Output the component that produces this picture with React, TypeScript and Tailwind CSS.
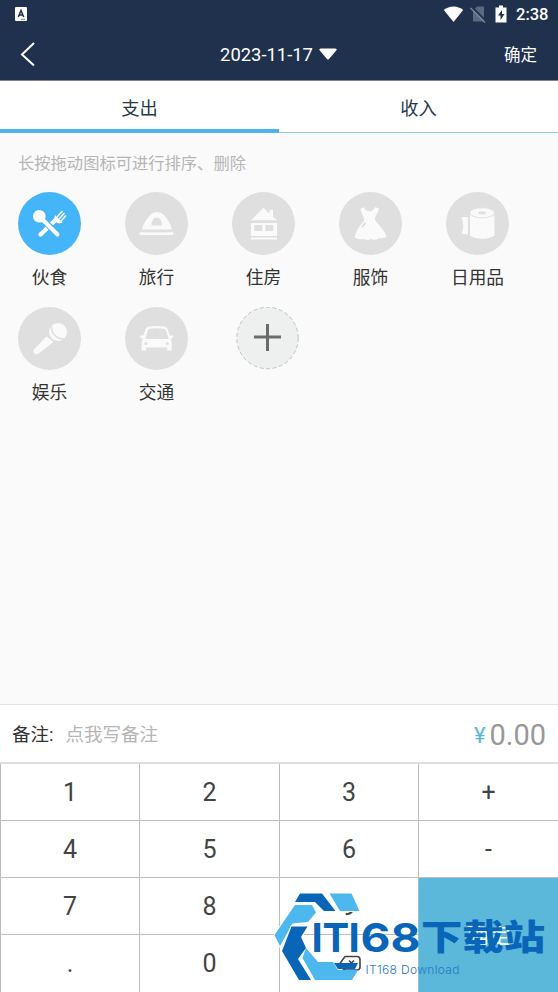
import { useState } from "react";

const circle = "w-[63px] h-[63px] rounded-full flex items-center justify-center";

function FoodIcon() {
  return (
    <svg className="w-[63px] h-[63px]" viewBox="0 0 63 63" fill="none" stroke="#fff" strokeLinecap="round">
      <path d="M22.500 42.500L37 28.500" strokeWidth="4.400" />
      <path d="M39.500 24.500L44 19.500M41.500 26.500L46 21.500M43.500 28.500L47.500 24" strokeWidth="1.500" />
      <path d="M37.500 24.500c-1.500 4 2 7.500 6 5.500l-3-2.500z" fill="#fff" strokeWidth="1.500" />
      <path d="M21 24L41.500 44" stroke="#45b5f9" strokeWidth="6.500" />
      <path d="M22 25L39.500 42.500" strokeWidth="4" />
      <circle cx="21.300" cy="24.300" r="6.300" fill="#fff" stroke="none" />
    </svg>
  );
}

function TravelIcon() {
  return (
    <svg className="w-[63px] h-[63px]" viewBox="0 0 63 63" fill="#fafafa">
      <path
        fillRule="evenodd"
        d="M17 37.500C18 32 21.500 27 25.500 22.500c3.500-3.500 9.500-3.500 13 0C42.500 27 46 32 47 37.500zM26.500 33.500h10.500c0-4.500-2-8-5.200-8s-5.300 3.500-5.300 8z"
      />
      <rect x="14.500" y="40.300" width="34" height="2.600" rx="1" />
    </svg>
  );
}

function HouseIcon() {
  return (
    <svg className="w-[63px] h-[63px]" viewBox="0 0 63 63" fill="#fafafa">
      <path d="M19 28.300L31.500 15.700l6 6v-4H41v7l4 3.600z" />
      <path fillRule="evenodd" d="M19 31h26v13H19zM22.300 33v6h8v-6zM33.300 33v6h8v-6z" />
      <rect x="19" y="45.500" width="26" height="2" />
    </svg>
  );
}

function DressIcon() {
  return (
    <svg className="w-[63px] h-[63px]" viewBox="0 0 63 63">
      <path
        fill="#fafafa"
        d="M21.500 16.500l3.500-1.200c1 2.500 3 4 5.500 4s4.500-1.500 5.500-4.300l4 1.500c-1 5-4 7-4 11 1 3.500 9 9 11.500 17-3 2.500-6 1.500-8 2-2.500 2-6 1-8 .5-2.500 2-5 0-7.500.2-3.500.5-6.500-.2-8.300-2C17 39 21 33 25 29c1-4-3.500-8-3.500-12.500z"
      />
      <path d="M23.500 34.500l2.500-3" stroke="#dfdfdf" strokeWidth="2" strokeLinecap="round" />
    </svg>
  );
}

function PaperIcon() {
  return (
    <svg className="w-[63px] h-[63px]" viewBox="0 0 63 63" fill="#fafafa">
      <path d="M15.500 25h6.300v17.500l-6.300-.8c2.500-5 2-11 0-16.700z" />
      <path d="M24 22.500c4 4.300 20.500 4.300 24.500 0V43c-4 5-20.500 5-24.500 0z" />
      <ellipse cx="36.200" cy="20.800" rx="12.300" ry="5" fill="#fafafa" stroke="#dfdfdf" strokeWidth=".8" />
      <ellipse cx="36.200" cy="20.800" rx="4" ry="1.600" fill="#dfdfdf" />
    </svg>
  );
}

function MicIcon() {
  return (
    <svg className="w-[63px] h-[63px]" viewBox="0 0 63 63">
      <circle cx="40" cy="25" r="9" fill="#fafafa" />
      <path d="M33.500 19c-.5 7 5 13.500 13 13" fill="none" stroke="#dfdfdf" strokeWidth="1.500" />
      <path fill="#fafafa" d="M28.500 29.500l7 5.500L20 47c-3 1-5.500-1.500-4.500-4z" />
    </svg>
  );
}

function CarIcon() {
  return (
    <svg className="w-[63px] h-[63px]" viewBox="0 0 63 63" fill="#fafafa">
      <path
        fillRule="evenodd"
        d="M24 19.500q7.700-1 15.400 0 2.600.5 3.400 3l2.200 6.300 2.500-.6 1 2-2.800 1.500 1 3.300v8.500h-4.500v-3H21v3h-4.500V35l1.200-3.300-3-1.500 1-2 2.500.6 2.300-6.300q.8-2.500 3.500-3zM22.700 24l-2.500 8h23.500l-2.500-8q-.5-2-2-2.300-7.500-.8-14.700 0-1.400.3-1.800 2.300z"
      />
      <circle cx="20.800" cy="36.500" r="1.500" fill="#dfdfdf" />
      <circle cx="42.300" cy="36.500" r="1.500" fill="#dfdfdf" />
    </svg>
  );
}

const categories = [
  { name: "伙食", icon: <FoodIcon /> },
  { name: "旅行", icon: <TravelIcon /> },
  { name: "住房", icon: <HouseIcon /> },
  { name: "服饰", icon: <DressIcon /> },
  { name: "日用品", icon: <PaperIcon /> },
  { name: "娱乐", icon: <MicIcon /> },
  { name: "交通", icon: <CarIcon /> },
];

const keys = ["1", "2", "3", "+", "4", "5", "6", "-", "7", "8", "9"];

function StatusBar() {
  return (
    <div className="h-7 flex items-center justify-between pl-[15px] pr-[10px]">
      <svg className="w-3 h-[14px]" viewBox="0 0 12 14">
        <rect width="12" height="14" rx="1" fill="#fff" />
        <path d="M3.300 10L6 3.500 8.700 10M4.300 8h3.500" fill="none" stroke="#1f314d" strokeWidth="1.500" />
        <path d="M6 12.300h4" stroke="#1f314d" strokeWidth=".6" />
      </svg>
      <div className="flex items-center">
        <svg className="w-[21px] h-[18px]" viewBox="0 0 21 18" fill="#fff">
          <path d="M10.500 17L.8 5C6 .2 15 .2 20.200 5z" />
        </svg>
        <svg className="w-4 h-[18px] ml-[6px]" viewBox="0 0 16 18">
          <path d="M7 1.500h7v15H3V6z" fill="#5b6980" />
          <path d="M1.500 1.500L16 16" stroke="#1f314d" strokeWidth="1.800" />
          <path d="M.5 3L15 17.500" stroke="#7a8699" strokeWidth="1.500" />
        </svg>
        <svg className="w-3 h-[18px] ml-[9px]" viewBox="0 0 12 18">
          <path d="M4 .5h4v2h3.500v15H.5v-15H4z" fill="#fff" />
          <path d="M7 5l-4 5.500h2.500V15l4-6H7z" fill="#1f314d" />
        </svg>
        <span className="ml-[9px] pt-px w-8 text-[16.500px] leading-7 font-medium text-white whitespace-nowrap">2:38</span>
      </div>
    </div>
  );
}

// site badge laid over the bottom right of the keypad
function Watermark() {
  return (
    <svg className="absolute left-[270px] top-[888px] w-[288px] h-[104px] pointer-events-none" viewBox="270 888 288 104">
      <g stroke="#fff" strokeWidth="2" paintOrder="stroke">
        <path d="M300 893.500h22l13.500 17.500H324l-9-9h-20z" fill="#0865b8" />
        <path d="M329.500 893.500h22l8 17.500H340z" fill="#4db8ed" />
        <path d="M295 905h17l4 7.500-8 9.500-15.500 1.500L280 946l-5.500-11z" fill="#4db8ed" />
        <path d="M291.500 926.500h16L301 937l5 11-8 11 13 21h-12l-17-29z" fill="#0865b8" />
      </g>
      <path d="M306 948l12 14h15l5 8h20l-6 10h-37l-12.500-22z" fill="#4db8ed" />
      <path d="M334 963h24l-3 6H338z" fill="#0865b8" />
      <g fill="#0865b8" fontWeight="700">
        <text x="311.500 322.500 348.500" y="952" fontFamily="Inter, sans-serif" fontSize="40">
          ITI
        </text>
        <text x="360.500" y="952" fontFamily="Inter, sans-serif" fontSize="40" textLength="60" lengthAdjust="spacingAndGlyphs">
          68
        </text>
        <text x="421" y="949.500" fontFamily="'Noto Sans CJK SC', sans-serif" fontSize="35" fontWeight="900" textLength="124" lengthAdjust="spacingAndGlyphs">
          下载站
        </text>
      </g>
      <text x="365.500" y="974" fontFamily="Inter, sans-serif" fontWeight="300" fontSize="12" fill="#2877c2" textLength="94">
        IT168 Download
      </text>
    </svg>
  );
}

export default function App() {
  const [tab, setTab] = useState(0);
  const [selected, setSelected] = useState(0);

  return (
    <div className="relative w-[558px] h-[992px] overflow-hidden flex flex-col bg-[#fafafa] font-['Roboto','Noto_Sans_CJK_SC',sans-serif] text-[#333]">
      {/* Header */}
      <header className="h-[81px] shrink-0 bg-[#1f314d] border-b border-[#7c818b] text-white">
        <StatusBar />
        <div className="h-[52px] flex items-center justify-between pl-5 pr-[21px]">
          <svg className="w-4 h-6" viewBox="0 0 16 24" fill="none" stroke="#fff" strokeWidth="2">
            <path d="M14 1L2 12.500 14 23.500" />
          </svg>
          <div className="flex items-center gap-[6px] pl-[17px] text-[18.400px]">
            <span className="pt-px">2023-11-17</span>
            <svg className="w-[18px] h-3" viewBox="0 0 18 12" fill="#fff">
              <path d="M1.500.5h15q2 .5.7 2L10 11q-1 1-2 0L.8 2.500q-1.200-1.500.7-2z" />
            </svg>
          </div>
          <button className="pt-[5px] text-[16.500px]">确定</button>
        </div>
      </header>

      {/* Tabs */}
      <div className="h-[52px] shrink-0 flex bg-white">
        {["支出", "收入"].map((t, i) => (
          <button
            key={t}
            onClick={() => setTab(i)}
            className={`flex-1 flex items-center justify-center text-[18.300px] text-[#26394a] ${
              tab === i ? "border-b-4 border-[#4db5eb] pt-[7px]" : "border-b border-[#8ccdec] pt-[4px]"
            }`}
          >
            {t}
          </button>
        ))}
      </div>

      {/* Categories */}
      <main className="flex-1">
        <p className="pl-[18px] pt-[19px] h-[59px] text-[16.300px] leading-6 text-[#b5b5b5]">长按拖动图标可进行排序、删除</p>
        <div className="grid grid-cols-[repeat(5,107px)] auto-rows-[115px] -ml-1">
          {categories.map((c, i) => (
            <button key={c.name} onClick={() => setSelected(i)} className="flex flex-col items-center">
              <span className={`${circle} ${selected === i ? "bg-[#45b5f9]" : "bg-[#dfdfdf]"}`}>{c.icon}</span>
              <span className="mt-[9px] text-[17.700px] leading-7">{c.name}</span>
            </button>
          ))}
          <button className="flex flex-col items-center pl-[7px]">
            <svg className="w-[63px] h-[63px]" viewBox="0 0 63 63">
              <circle cx="31.500" cy="31" r="30.700" fill="#eef0f0" stroke="#c0c0c0" strokeDasharray="4 2.500" />
              <path d="M31.500 17v27M18 30h27" stroke="#6b6b6b" strokeWidth="3" />
            </svg>
          </button>
        </div>
      </main>

      {/* Remark and amount */}
      <div className="h-[58px] shrink-0 flex items-center bg-white border-t border-[#e2e2e2] px-3 pt-1">
        <span className="text-[18.500px]">备注:</span>
        <span className="ml-3 text-[18.500px] text-[#b5b5b5]">点我写备注</span>
        <span className="ml-auto mr-1 text-[22px] text-[#5bb5d6]">¥</span>
        <span className="text-[29px] text-[#999]">0.00</span>
      </div>

      {/* Keypad */}
      <div className="h-[230px] shrink-0 grid grid-cols-[139px_140px_139px_1fr] grid-rows-4 bg-white border-t-2 border-[#dedede] text-[25px] text-[#444]">
        {keys.map((k) => (
          <button key={k} className="border-l border-b border-[#bdbdbd] pt-[2px]">
            {k}
          </button>
        ))}
        <button className="row-span-2 border-l border-[#8fc4d8] bg-[#5cb8da] text-[22px] text-white">确定</button>
        <button className="border-l border-[#bdbdbd] pt-px">.</button>
        <button className="border-l border-[#bdbdbd] pt-px">0</button>
        <button className="border-l border-[#bdbdbd] flex items-center justify-center">
          <svg className="w-6 h-[17px]" viewBox="0 0 24 17" fill="none" stroke="#444" strokeWidth="1.600">
            <path d="M8 1.500h12q3 0 3 3V12q0 3-3 3H8L1 11z" />
            <path d="M12 5.500l5 5M17 5.500l-5 5" />
          </svg>
        </button>
      </div>

      <Watermark />
    </div>
  );
}
